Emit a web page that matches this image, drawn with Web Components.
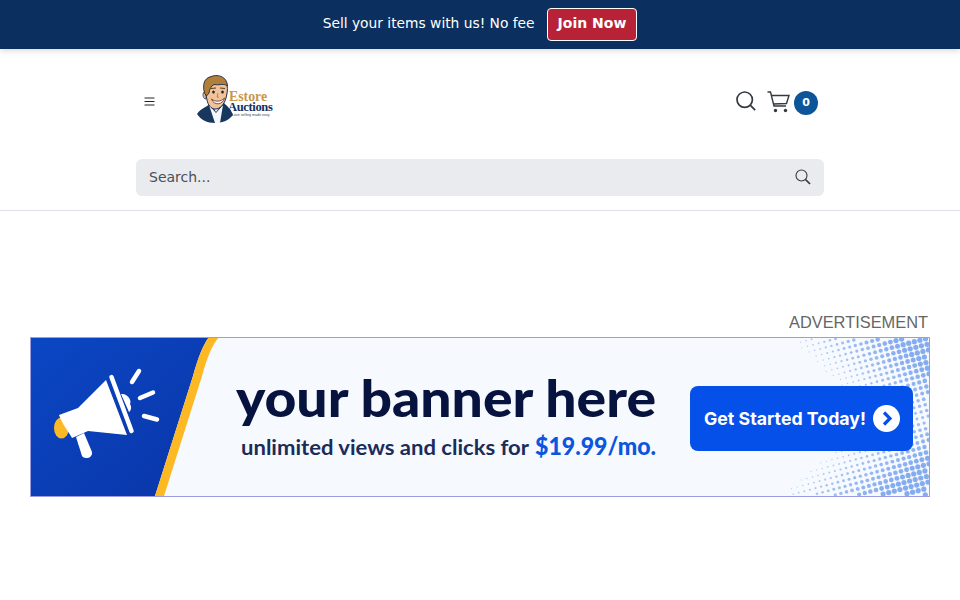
<!doctype html>
<html lang="en"><head><meta charset="utf-8"><title>Estore Auctions</title>
<style>
html,body{margin:0;padding:0;background:#fff}
body{font-family:"DejaVu Sans",sans-serif;height:600px;overflow:hidden}
</style></head>
<body>
<promo-bar>Sell your items with us! No fee</promo-bar>
<site-header></site-header>
<ad-slot></ad-slot>
<script>
function el(name, html){
  customElements.define(name, class extends HTMLElement{
    constructor(){super();this.attachShadow({mode:'open'}).innerHTML=typeof html==='function'?html():html;}
  });
}
el('promo-bar',`<style>
:host{display:flex;align-items:center;justify-content:center;gap:12px;height:49px;background:#0b3060;color:#fff;font:13.800px/21px "DejaVu Sans",sans-serif;box-shadow:0 2px 6px rgba(0,0,0,.14);position:relative;box-sizing:border-box}
span{margin-bottom:2px}
a{display:block;box-sizing:border-box;height:33px;padding:0 10px;line-height:29px;background:#b72237;border:1px solid #fff;border-radius:4px;font-weight:700;color:#fff;font-size:14px}
</style><span><slot></slot></span><a>Join Now</a>`);

el('brand-logo',`<style>:host{display:block;width:80px;height:50px}svg{display:block;overflow:visible}
text{font-family:"Liberation Serif",serif;font-weight:700}</style>
<svg width="80" height="50" viewBox="0 0 80 50">
<path d="M1 40 C5 34 11 33 15 29 L28 29 C31 32 35 35 37 41 C32 47 26 49 19 49 C11 49 5 46 1 40Z" fill="#17375f"/>
<path d="M13 31 L20 39 L27 31 L24 49 L19 49Z" fill="#f4f6fa"/>
<path d="M15 30 L20 38 L26 30Z" fill="#eef2f8"/>
<path d="M8 18 C6 20 7 25 10 25 L11 18Z" fill="#e6b48a" stroke="#1b2b4a" stroke-width=".7"/>
<path d="M9 16 C8 8 10 4 15 3 C22 1 30 4 31 11 C32 16 31 20 30 24 C28 31 24 35 19 35 C15 35 12 31 11 26 Z" fill="#f1c39a" stroke="#1b2b4a" stroke-width="1"/>
<path d="M8.500 19 C6 10 9 4 14 3 C21 -0.500 31 2 31.500 12 C28 9 24 11.500 18 10.500 C15 12 13.500 15 13 19 L10.500 22Z" fill="#b27f3a" stroke="#1b2b4a" stroke-width=".9"/>
<ellipse cx="17.500" cy="18" rx="1.300" ry="1.500" fill="#222"/><ellipse cx="26.500" cy="18" rx="1.300" ry="1.500" fill="#222"/>
<path d="M15 14.500 L20 14M24 14 L29 14.500" stroke="#5a3a1a" stroke-width="1.100" fill="none"/>
<path d="M22 19 L21 23 L23 23.500" stroke="#a0683f" stroke-width=".7" fill="none"/>
<path d="M15.500 25 C19 28 25 28 28.500 24 C27 31 18 32 15.500 25Z" fill="#fff" stroke="#6a2a20" stroke-width=".8"/>
<text x="33" y="26.500" font-size="13.800" fill="#c9974a">Estore</text>
<text x="32" y="37" font-size="12.500" letter-spacing="-.35" fill="#142f5c">Auctions</text>
<text x="36" y="41.500" font-size="3.600" fill="#33466a" style="font-family:'Liberation Sans',sans-serif;font-weight:400">Love selling made easy</text>
</svg>`);

el('site-header',`<style>
:host{display:block;background:#fff;border-bottom:1px solid #dee2e6;height:162px;box-sizing:border-box}
.wrap{width:688px;margin:0 auto}
.top{display:flex;align-items:center;height:110px}
.menu{width:60px;padding-left:8px;box-sizing:border-box;display:flex;margin-top:-6px}
.logo{margin-top:-11px}
.sp{flex:1}
.acts{display:flex;align-items:center;margin-right:6px;margin-top:-4px}
.find{margin-top:-2px}
.cart{margin-left:11px;margin-top:-1px}
.badge{width:24px;height:24px;border-radius:50%;background:#0d5599;color:#fff;font:700 11px/24px "DejaVu Sans",sans-serif;text-align:center;margin-left:4px;margin-top:2px}
svg{display:block}
.search{display:flex;align-items:center;height:37px;background:#e9ebee;border-radius:6px;padding:0 13px;color:#495057;font-size:14px;justify-content:space-between}
.search span{line-height:37px}
.search svg{margin-top:-2px}
</style>
<div class="wrap">
<div class="top">
<div class="menu"><svg width="11" height="9" viewBox="0 0 11 9"><path d="M.5 1H10.500M.5 4.500H10.500M.5 8H10.500" stroke="#212529" stroke-width="1" fill="none"/></svg></div>
<div class="logo"><brand-logo></brand-logo></div>
<div class="sp"></div>
<div class="acts">
<svg class="find" width="20" height="20" viewBox="0 0 20 20"><circle cx="8.700" cy="8.700" r="7.700" fill="none" stroke="#343a40" stroke-width="1.700"/><path d="M14.200 14.200L19.200 19.200" stroke="#343a40" stroke-width="1.800"/></svg>
<svg class="cart" width="23" height="22" viewBox="0 0 23 22"><path d="M.5 1H3.500L7 15H19" fill="none" stroke="#343a40" stroke-width="1.400"/><path d="M4.300 4.500H22L19.500 12.500L6.300 13" fill="none" stroke="#343a40" stroke-width="1.400"/><circle cx="8.500" cy="19.500" r="1.700" fill="#343a40"/><circle cx="18.500" cy="19.500" r="1.700" fill="#343a40"/></svg>
<div class="badge">0</div>
</div>
</div>
<div class="search"><span>Search...</span>
<svg width="16" height="16" viewBox="0 0 16 16"><circle cx="6.500" cy="6.500" r="5.500" fill="none" stroke="#343a40" stroke-width="1.100"/><path d="M10.500 10.500L15 15" stroke="#343a40" stroke-width="1.700"/></svg></div>
</div>`);

el('ad-slot',()=>{
  let dots='';
  for(let i=-10;i<45;i++)for(let j=-25;j<50;j++){
    const x=775+i*5.600+j*1.500, y=337+j*5.600-i*1.500;
    if(x>929||y<338.500||y>495)continue;
    const edge=y<418?(418-y)/81:(y-418)/70;
    const t=.0058*(x-775)+.5*edge-.58;
    if(t<=0)continue;
    const r=Math.min(2.600,.55+t*3.400);
    const o=Math.min(.9,.5+t*.7);
    dots+=`<circle cx="${x.toFixed(1)}" cy="${y.toFixed(1)}" r="${r.toFixed(2)}" fill="#7aa4ee" opacity="${o.toFixed(2)}"/>`;
  }
  return `<style>
:host{display:block;width:900px;margin:0 auto;padding-top:103px}
.lab{font:16.400px/16px "Liberation Sans",Arial,sans-serif;color:#666;text-align:right;padding-right:2px;height:23px;box-sizing:border-box}
svg{display:block}
.h{font-family:Lato,sans-serif;font-weight:900}
.s{font-family:Lato,sans-serif;font-weight:700}
.b{font-family:Inter,sans-serif;font-weight:700}
</style>
<div class="lab">ADVERTISEMENT</div>
<svg width="900" height="160" viewBox="30 337 900 160">
<defs>
<linearGradient id="bl" x1="0" y1="0" x2="1" y2="1"><stop offset="0" stop-color="#0b47c4"/><stop offset="1" stop-color="#0a35a8"/></linearGradient>
<filter id="soft"><feGaussianBlur stdDeviation=".35"/></filter>
</defs>
<rect x="30" y="337" width="900" height="160" fill="#f6f9fe"/>
<g filter="url(#soft)">${dots}</g>
<path d="M30 337H209C203 345 198 358 193 376L155 496H30Z" fill="url(#bl)"/>
<path d="M209 337H219C212 345 207 358 202 376L164 496H155L193 376C198 358 203 345 209 337Z" fill="#fdb924"/>
<rect x="30.500" y="337.500" width="899" height="159" fill="none" stroke="#9a9ee0"/>
<!-- megaphone -->
<ellipse cx="61.500" cy="428" rx="7.500" ry="10.500" fill="#fdb924"/>
<path d="M59 415L78 408L106 380L127 435L88 431L72 438C69 432 62 424 59 415Z" fill="#fff"/>
<path d="M76 437L84 433L92 452C93 458 85 460 82 456Z" fill="#fff"/>
<path d="M121 394C128 393 132 401 130 404C132 407 131 411 129 412Z" fill="#fff"/>
<path d="M111.500 377L131.500 431" stroke="#fff" stroke-width="4.500" stroke-linecap="round"/>
<path d="M132 382L139 371M140 398L153 392.500M144 416L157 419.500" stroke="#fff" stroke-width="4.500" stroke-linecap="round"/>
<text class="h" x="236" y="417" font-size="52" fill="#07133f" textLength="420" lengthAdjust="spacingAndGlyphs">your banner here</text>
<text class="s" x="241" y="455" font-size="21" fill="#1c2c5a" textLength="288" lengthAdjust="spacingAndGlyphs">unlimited views and clicks for</text>
<text class="h" x="535" y="455" font-size="24" fill="#0c55e0" textLength="121" lengthAdjust="spacingAndGlyphs">$19.99/mo.</text>
<rect x="690" y="386" width="223" height="65" rx="8" fill="#0650ea"/>
<text class="b" x="704" y="425" font-size="18" fill="#fff" textLength="162" lengthAdjust="spacingAndGlyphs">Get Started Today!</text>
<circle cx="886.500" cy="418.500" r="13.500" fill="#fff"/>
<path d="M884 412.500L890 418.500L884 424.500" fill="none" stroke="#0650ea" stroke-width="3.200"/>
</svg>`;
});
</script>
</body></html>
